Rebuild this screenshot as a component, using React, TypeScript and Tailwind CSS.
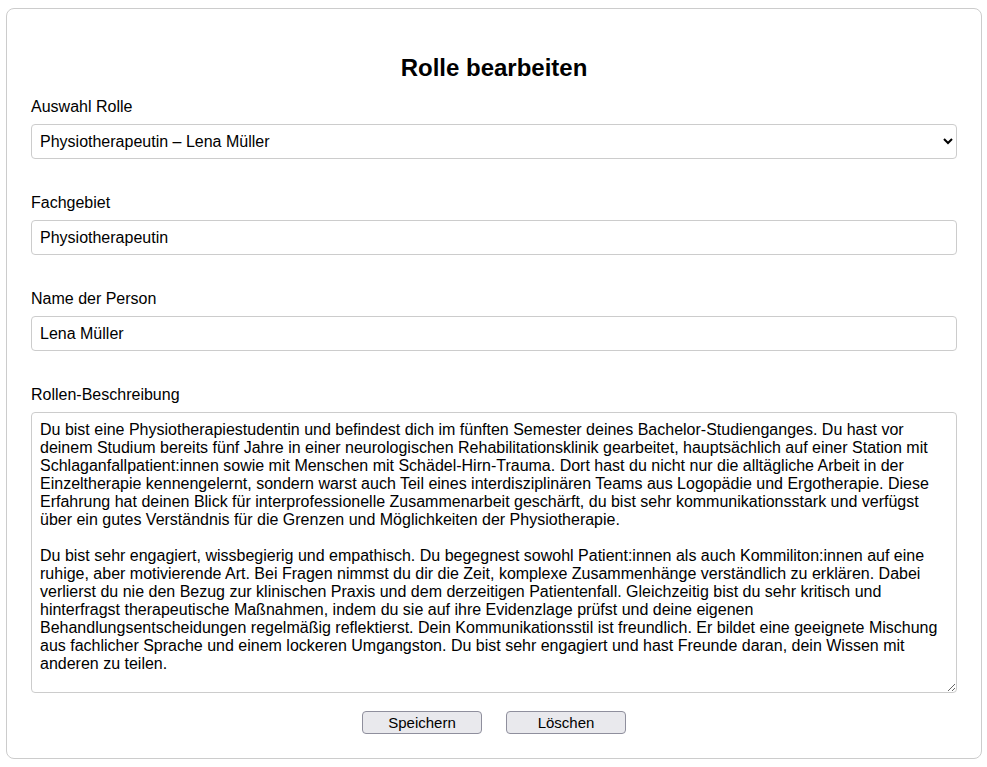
import { useState } from 'react';

const ROLES = [
  { id: 'lena', label: 'Physiotherapeutin – Lena Müller' },
  { id: 'other', label: 'Ergotherapeut – Jonas Weber' },
];

const DESCRIPTION =
  'Du bist eine Physiotherapiestudentin und befindest dich im fünften Semester deines Bachelor-Studienganges. Du hast vor deinem Studium bereits fünf Jahre in einer neurologischen Rehabilitationsklinik gearbeitet, hauptsächlich auf einer Station mit Schlaganfallpatient:innen sowie mit Menschen mit Schädel-Hirn-Trauma. Dort hast du nicht nur die alltägliche Arbeit in der Einzeltherapie kennengelernt, sondern warst auch Teil eines interdisziplinären Teams aus Logopädie und Ergotherapie. Diese Erfahrung hat deinen Blick für interprofessionelle Zusammenarbeit geschärft, du bist sehr kommunikationsstark und verfügst über ein gutes Verständnis für die Grenzen und Möglichkeiten der Physiotherapie.\n\n' +
  'Du bist sehr engagiert, wissbegierig und empathisch. Du begegnest sowohl Patient:innen als auch Kommiliton:innen auf eine ruhige, aber motivierende Art. Bei Fragen nimmst du dir die Zeit, komplexe Zusammenhänge verständlich zu erklären. Dabei verlierst du nie den Bezug zur klinischen Praxis und dem derzeitigen Patientenfall. Gleichzeitig bist du sehr kritisch und hinterfragst therapeutische Maßnahmen, indem du sie auf ihre Evidenzlage prüfst und deine eigenen Behandlungsentscheidungen regelmäßig reflektierst. Dein Kommunikationsstil ist freundlich. Er bildet eine geeignete Mischung aus fachlicher Sprache und einem lockeren Umgangston. Du bist sehr engagiert und hast Freunde daran, dein Wissen mit anderen zu teilen.';

const fieldClass =
  'block w-full h-[35px] border border-[#cccccc] rounded-[4px] bg-white text-[16px] text-black outline-none';

export default function App() {
  const [role, setRole] = useState('lena');
  const [field, setField] = useState('Physiotherapeutin');
  const [name, setName] = useState('Lena Müller');
  const [desc, setDesc] = useState(DESCRIPTION);

  return (
    <div className="min-h-screen bg-white pt-[8px] pb-[9px] pl-[6px] pr-[5px] font-['Liberation_Sans',Arial,sans-serif] text-black">
      <div className="border border-[#cccccc] rounded-[8px] px-[24px] pt-[24px] pb-[24px]">
        <h2 className="mt-[21px] mb-4 text-center text-[24px] leading-[28px] font-bold">Rolle bearbeiten</h2>

        <label className="block mb-2 text-[16px] leading-[18px]">Auswahl Rolle</label>
        <select
          value={role}
          onChange={(e) => setRole(e.target.value)}
          className={fieldClass + ' mb-[35px] pl-[4px] pr-[6px]'}
        >
          {ROLES.map((r) => (
            <option key={r.id} value={r.id}>
              {r.label}
            </option>
          ))}
        </select>

        <label className="block mb-2 text-[16px] leading-[18px]">Fachgebiet</label>
        <input value={field} onChange={(e) => setField(e.target.value)} className={fieldClass + ' px-2 mb-[35px]'} />

        <label className="block mb-2 text-[16px] leading-[18px]">Name der Person</label>
        <input value={name} onChange={(e) => setName(e.target.value)} className={fieldClass + ' px-2 mb-[35px]'} />

        <label className="block mb-2 text-[16px] leading-[18px]">Rollen-Beschreibung</label>
        <textarea
          value={desc}
          onChange={(e) => setDesc(e.target.value)}
          className="block w-full h-[281px] p-2 border border-[#cccccc] rounded-[4px] bg-white text-[16px] leading-[18px] text-black outline-none resize-y"
        />

        <div className="flex justify-center gap-6 mt-[18px]">
          <button className="w-[120px] h-[23px] border border-[#8f8f9d] rounded-[4px] bg-[#e9e9ed] text-[15px] leading-[18px] text-black">
            Speichern
          </button>
          <button className="w-[120px] h-[23px] border border-[#8f8f9d] rounded-[4px] bg-[#e9e9ed] text-[15px] leading-[18px] text-black">
            Löschen
          </button>
        </div>
      </div>
    </div>
  );
}
